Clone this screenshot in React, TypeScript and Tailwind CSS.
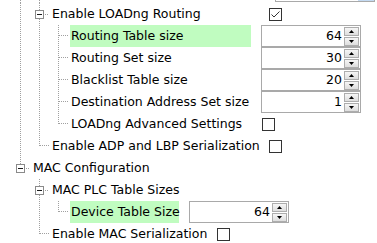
import clsx from "clsx"

type Guide = "line" | "none"
type Conn = "tee" | "ell" | "boxTee" | "boxEll"

type Value =
  | { kind: "check"; checked: boolean; ml: string }
  | { kind: "spin"; value: number; ml: string }

interface RowDef {
  guides: Guide[]
  conn: Conn
  label: string
  w?: string
  hl?: boolean
  value?: Value
}

const DOT = "#a0a0a0"

const rows: RowDef[] = [
  { guides: ["line"], conn: "boxTee", label: "Enable LOADng Routing", w: "w-[208px]", value: { kind: "check", checked: true, ml: "ml-[10px]" } },
  { guides: ["line", "line"], conn: "tee", label: "Routing Table size", w: "w-[181px]", hl: true, value: { kind: "spin", value: 64, ml: "ml-[10px]" } },
  { guides: ["line", "line"], conn: "tee", label: "Routing Set size", w: "w-[181px]", value: { kind: "spin", value: 30, ml: "ml-[10px]" } },
  { guides: ["line", "line"], conn: "tee", label: "Blacklist Table size", w: "w-[181px]", value: { kind: "spin", value: 20, ml: "ml-[10px]" } },
  { guides: ["line", "line"], conn: "tee", label: "Destination Address Set size", w: "w-[181px]", value: { kind: "spin", value: 1, ml: "ml-[10px]" } },
  { guides: ["line", "line"], conn: "ell", label: "LOADng Advanced Settings", w: "w-[181px]", value: { kind: "check", checked: false, ml: "ml-[11px]" } },
  { guides: ["line"], conn: "ell", label: "Enable ADP and LBP Serialization", w: "w-[208px]", value: { kind: "check", checked: false, ml: "ml-[10px]" } },
  { guides: [], conn: "boxEll", label: "MAC Configuration" },
  { guides: ["none"], conn: "boxTee", label: "MAC PLC Table Sizes" },
  { guides: ["none", "line"], conn: "ell", label: "Device Table Size", w: "w-[109px]", hl: true, value: { kind: "spin", value: 64, ml: "ml-[10px]" } },
  { guides: ["none"], conn: "ell", label: "Enable MAC Serialization", w: "w-[156px]", value: { kind: "check", checked: false, ml: "ml-[10px]" } },
]

function TreeCell({ kind, h = 22 }: { kind: Guide | Conn; h?: number }) {
  return (
    <svg width={19} height={h} className="block shrink-0">
      {kind === "line" && <line x1={9.5} y1={0} x2={9.5} y2={h} stroke={DOT} strokeDasharray="1 1" />}
      {kind === "tee" && (
        <>
          <line x1={9.5} y1={0} x2={9.5} y2={h} stroke={DOT} strokeDasharray="1 1" />
          <line x1={10} y1={10.5} x2={20} y2={10.5} stroke={DOT} strokeDasharray="1 1" />
        </>
      )}
      {kind === "ell" && (
        <>
          <line x1={9.5} y1={0} x2={9.5} y2={11} stroke={DOT} strokeDasharray="1 1" />
          <line x1={10} y1={10.5} x2={20} y2={10.5} stroke={DOT} strokeDasharray="1 1" />
        </>
      )}
      {(kind === "boxTee" || kind === "boxEll") && (
        <>
          <line x1={9.5} y1={0} x2={9.5} y2={7} stroke={DOT} strokeDasharray="1 1" />
          {kind === "boxTee" && <line x1={9.5} y1={16} x2={9.5} y2={h} stroke={DOT} strokeDasharray="1 1" />}
          <line x1={15} y1={11.5} x2={20} y2={11.5} stroke={DOT} strokeDasharray="1 1" />
          <rect x={5.5} y={7.5} width={8} height={8} fill="#fff" stroke="#8a8a8a" />
          <line x1={7} y1={11.5} x2={12} y2={11.5} stroke="#1a1a1a" />
        </>
      )}
    </svg>
  )
}

function Checkbox({ checked, ml }: { checked: boolean; ml: string }) {
  return (
    <div className={clsx("flex h-[13px] w-[13px] shrink-0 items-center justify-center border border-[#333] bg-white", ml)}>
      {checked && (
        <svg width={11} height={11} className="block">
          <path d="M1.5 5.5 L4 8 L9.5 2.5" fill="none" stroke="#333" strokeWidth={1} />
        </svg>
      )}
    </div>
  )
}

function SpinButton({ up }: { up?: boolean }) {
  return (
    <div className="flex h-[9px] items-center justify-center border border-[#adadad] bg-gradient-to-b from-[#f6f6f6] to-[#dedede]">
      <svg width={5} height={3} className="block">
        <path d={up ? "M2.5 0 L5 3 L0 3Z" : "M0 0 L5 0 L2.5 3Z"} fill="#000" />
      </svg>
    </div>
  )
}

function Spinner({ value, ml }: { value: number; ml: string }) {
  return (
    <div className={clsx("flex h-[22px] w-[100px] shrink-0 border border-[#a9a9a9] bg-white", ml)}>
      <div className="flex flex-1 items-center justify-end pr-[2px]">{value}</div>
      <div className="mr-px flex w-[15px] flex-col gap-px pt-px">
        <SpinButton up />
        <SpinButton />
      </div>
    </div>
  )
}

function TreeRow({ row }: { row: RowDef }) {
  return (
    <div className="flex h-[22px] items-center">
      {row.guides.map((g, i) => (
        <TreeCell key={i} kind={g} />
      ))}
      <TreeCell kind={row.conn} />
      <div
        className={clsx(
          "ml-[2px] flex h-full shrink-0 items-center whitespace-nowrap pl-px",
          row.w,
          row.hl && "bg-[#c0fcc0]"
        )}
      >
        {row.label}
      </div>
      {row.value?.kind === "check" && <Checkbox checked={row.value.checked} ml={row.value.ml} />}
      {row.value?.kind === "spin" && <Spinner value={row.value.value} ml={row.value.ml} />}
    </div>
  )
}

export default function App() {
  return (
    <div className="h-[243px] w-[377px] overflow-hidden bg-white pl-[11px] font-['DejaVu_Sans',sans-serif] text-[12.5px] text-black">
      <div className="flex h-[3px]">
        <TreeCell kind="line" h={3} />
        <TreeCell kind="line" h={3} />
        <div className="ml-[226px] flex h-[2px] w-[100px] justify-end border-x border-b border-[#a9a9a9]">
          <div className="w-[16px] bg-[#c4daf2]" />
        </div>
      </div>
      {rows.map((r) => (
        <TreeRow key={r.label} row={r} />
      ))}
    </div>
  )
}
